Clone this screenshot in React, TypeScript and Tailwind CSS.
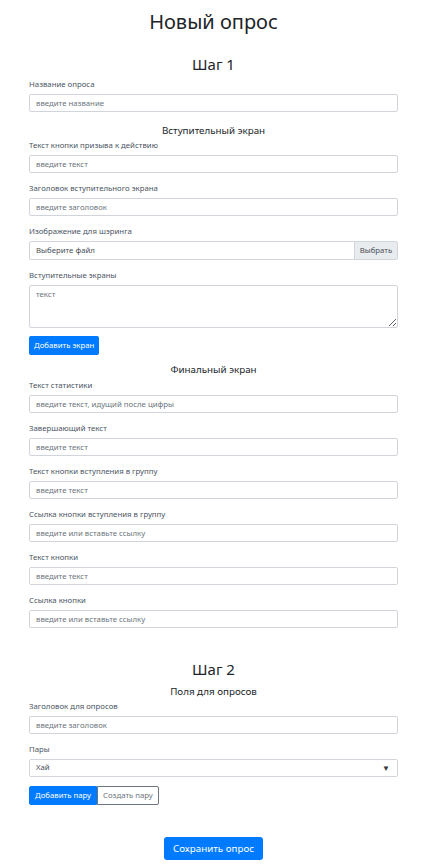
import React from "react";

function Label({ children }: { children: React.ReactNode }) {
  return (
    <div className="text-[7.8px] leading-[11px] text-[#4b5563] mb-[4px] whitespace-nowrap">
      {children}
    </div>
  );
}

function Field({ label, placeholder }: { label: string; placeholder: string }) {
  return (
    <div className="mb-[10px]">
      <Label>{label}</Label>
      <input
        className="block w-full h-[18px] border border-[#d1d5db] rounded-[2px] px-[6px] text-[7.8px] text-[#495057] placeholder:text-[#6c757d] bg-white outline-none"
        placeholder={placeholder}
      />
    </div>
  );
}

function H5({ children, className = "" }: { children: React.ReactNode; className?: string }) {
  return (
    <div className={"text-center text-[9.8px] leading-[13px] font-normal text-[#212529] " + className}>
      {children}
    </div>
  );
}

function H3({ children, className = "" }: { children: React.ReactNode; className?: string }) {
  return (
    <div className={"text-center text-[15px] leading-[18px] font-normal text-[#212529] " + className}>
      {children}
    </div>
  );
}

export default function App() {
  return (
    <div className="min-h-[865px] bg-white font-['Noto_Sans',sans-serif]">
      <div className="ml-[29px] w-[369px] pt-[10px] pb-[4px]">
        <div className="text-center text-[20px] leading-[24px] font-normal text-[#212529]">
          Новый опрос
        </div>

        <H3 className="mt-[21px] mb-[6px]">Шаг 1</H3>
        <Field label="Название опроса" placeholder="введите название" />

        <H5 className="mt-[12px] mb-[3px]">Вступительный экран</H5>
        <Field label="Текст кнопки призыва к действию" placeholder="введите текст" />
        <Field label="Заголовок вступительного экрана" placeholder="введите заголовок" />

        <div className="mb-[10px]">
          <Label>Изображение для шэринга</Label>
          <div className="flex h-[19px] border border-[#d1d5db] rounded-[2px] overflow-hidden text-[7.8px]">
            <div className="flex-1 flex items-center px-[6px] text-[#495057]">Выберите файл</div>
            <div className="w-[43px] flex items-center justify-center bg-[#e9ecef] border-l border-[#d1d5db] text-[#495057]">
              Выбрать
            </div>
          </div>
        </div>

        <div className="mb-[8px]">
          <Label>Вступительные экраны</Label>
          <textarea
            className="block w-full h-[43px] border border-[#d1d5db] rounded-[2px] px-[6px] py-[3px] text-[7.8px] leading-[11px] text-[#495057] placeholder:text-[#6c757d] bg-white outline-none"
            placeholder="текст"
          />
        </div>
        <div className="flex">
          <button className="h-[19px] px-[5px] rounded-[2px] bg-[#007bff] text-white text-[7.8px] leading-[19px]">
            Добавить экран
          </button>
        </div>

        <H5 className="mt-[7.5px] mb-[4px]">Финальный экран</H5>
        <Field label="Текст статистики" placeholder="введите текст, идущий после цифры" />
        <Field label="Завершающий текст" placeholder="введите текст" />
        <Field label="Текст кнопки вступления в группу" placeholder="введите текст" />
        <Field label="Ссылка кнопки вступления в группу" placeholder="введите или вставьте ссылку" />
        <Field label="Текст кнопки" placeholder="введите текст" />
        <Field label="Ссылка кнопки" placeholder="введите или вставьте ссылку" />

        <H3 className="mt-[32px] mb-[7px]">Шаг 2</H3>
        <H5 className="mb-[3px]">Поля для опросов</H5>
        <Field label="Заголовок для опросов" placeholder="введите заголовок" />

        <div className="mb-[9px]">
          <Label>Пары</Label>
          <div className="flex items-center justify-between h-[18px] border border-[#d1d5db] rounded-[2px] px-[6px] text-[7.8px] text-[#495057] bg-white">
            <span>Хай</span>
            <span className="text-[8px] text-[#343a40] mr-[1px]">▼</span>
          </div>
        </div>

        <div className="flex">
          <button className="h-[19px] px-[5px] rounded-l-[2px] bg-[#007bff] border border-[#007bff] text-white text-[7.8px] leading-[17px]">
            Добавить пару
          </button>
          <button className="h-[19px] px-[5px] rounded-r-[2px] bg-white border border-[#6c757d] text-[#6c757d] text-[7.8px] leading-[17px]">
            Создать пару
          </button>
        </div>

        <div className="flex justify-center mt-[32px]">
          <button className="h-[23px] px-[9px] rounded-[3px] bg-[#007bff] text-white text-[9.8px] leading-[23px]">
            Сохранить опрос
          </button>
        </div>
      </div>
    </div>
  );
}
